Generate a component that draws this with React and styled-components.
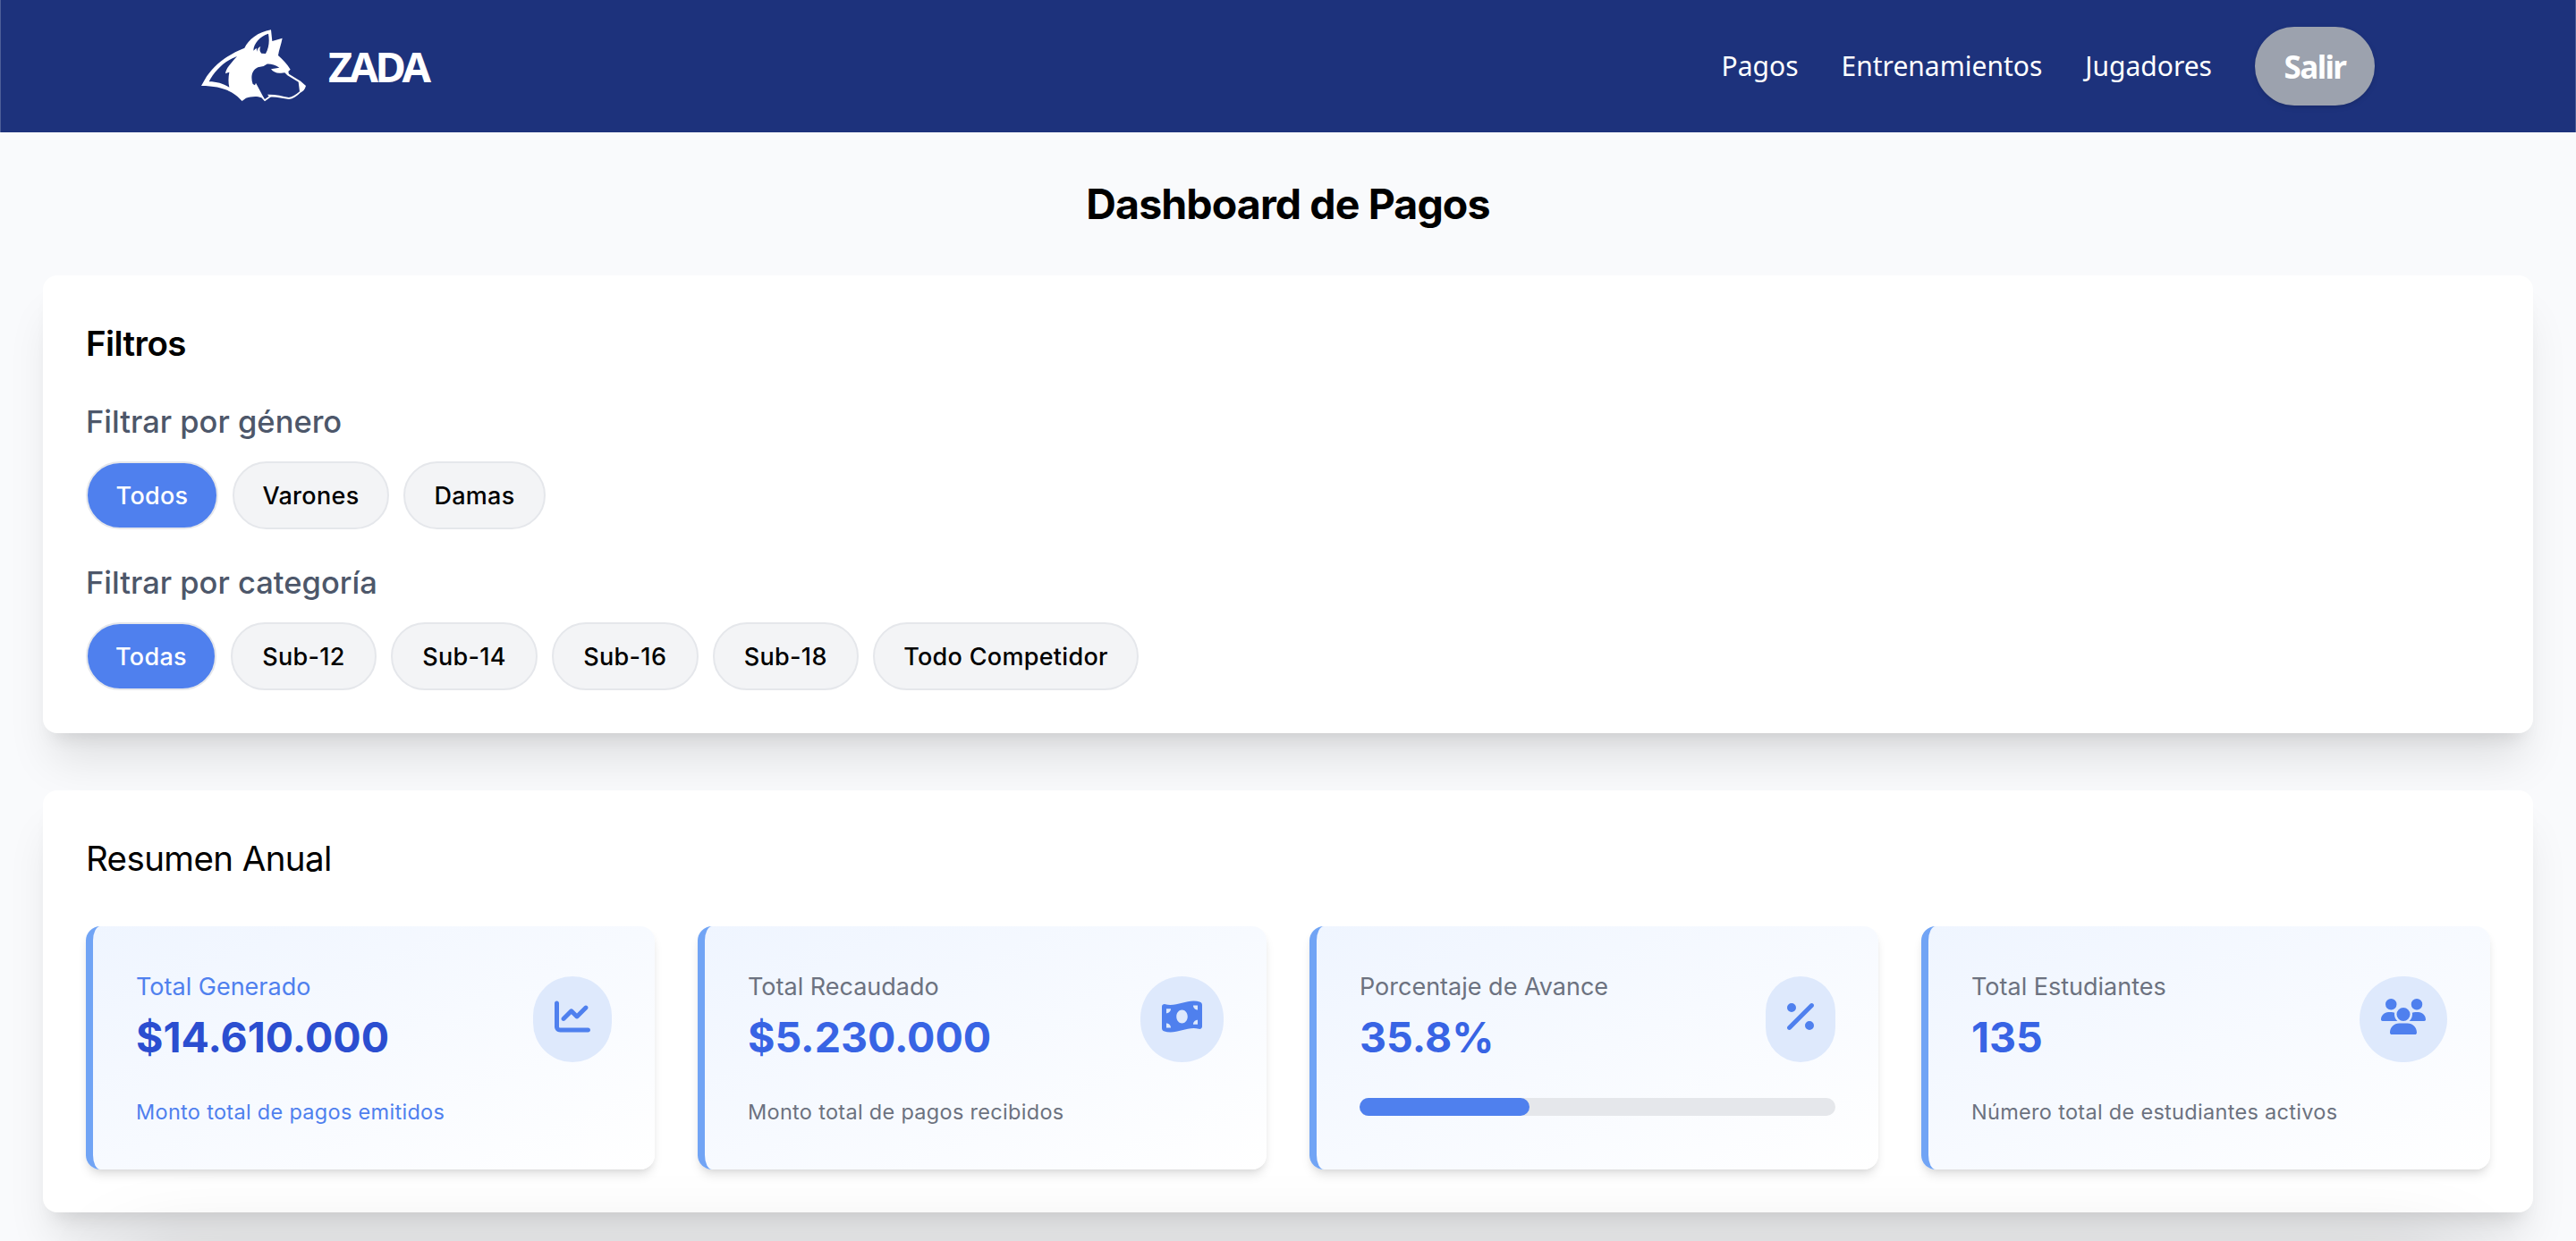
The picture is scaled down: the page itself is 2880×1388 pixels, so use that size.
import React from "react";
import styled, { createGlobalStyle } from "styled-components";
import { FaChartLine, FaMoneyBillWave, FaPercent, FaUsers } from "react-icons/fa6";

const GlobalStyle = createGlobalStyle`
  *, *::before, *::after { box-sizing: border-box; }
  html, body { margin: 0; height: 100%; overflow: hidden; }
  body { background: #f9fafc; font-family: Inter, "Liberation Sans", sans-serif; color: #000; }
  h1, h2, h3, p { margin: 0; }
  button { font-family: inherit; cursor: pointer; }
`;

const Page = styled.div`
  position: relative;
  display: flex;
  flex-direction: column;
  height: 1388px;
  overflow: hidden;
`;

const Header = styled.header`
  display: flex;
  align-items: center;
  justify-content: space-between;
  height: 148px;
  flex: none;
  padding: 0 224px;
  background: #1d327c;
  color: #fff;
  font-family: "Noto Sans", "Open Sans", sans-serif;
  border-left: 1px solid #4d5e98;
  border-right: 1px solid #4d5e98;
`;

const Brand = styled.div`
  display: flex;
  align-items: center;
  gap: 24px;
`;

const BrandName = styled.span`
  font-size: 47px;
  font-weight: 700;
  line-height: 64px;
  letter-spacing: -3.6px;
`;

const Nav = styled.nav`
  display: flex;
  align-items: center;
  gap: 48px;
`;

const NavLink = styled.a`
  color: #fff;
  font-size: 30px;
  line-height: 48px;
  font-stretch: 87.5%;
  letter-spacing: ${(p) => p.$track}px;
`;

const LogoutButton = styled.button`
  width: 134px;
  height: 88px;
  border: 0;
  border-radius: 44px;
  background: #9ca2ae;
  color: #fff;
  font-size: 35px;
  font-weight: 700;
  letter-spacing: -1.6px;
  box-shadow: 0 2px 6px rgba(0, 0, 0, 0.1), 0 2px 4px -2px rgba(0, 0, 0, 0.1);
`;

const Main = styled.main`
  display: flex;
  flex-direction: column;
  padding: 48px 48px 0;
`;

const PageTitle = styled.h1`
  font-size: 46.5px;
  line-height: 64px;
  height: 112px;
  font-weight: 700;
  text-align: center;
  letter-spacing: -0.9px;
`;

const Panel = styled.section`
  flex: none;
  height: ${(p) => p.$height}px;
  margin-bottom: 64px;
  padding: 48px;
  border-radius: 16px;
  background: #fff;
  box-shadow: 0 40px 50px -10px rgba(0, 0, 0, 0.1), 0 16px 20px -12px rgba(0, 0, 0, 0.1);
`;

const PanelTitle = styled.h2`
  font-size: 38.5px;
  line-height: 56px;
  font-weight: ${(p) => p.$weight};
  letter-spacing: ${(p) => p.$track}px;
  margin-bottom: ${(p) => p.$gap}px;
`;

const FilterGroup = styled.div`
  display: flex;
  flex-direction: column;
  gap: 16px;
  margin-bottom: 32px;
`;

const FilterLabel = styled.h3`
  font-size: 34.5px;
  line-height: 56px;
  font-weight: 500;
  color: #4d576a;
  letter-spacing: ${(p) => p.$track}px;
`;

const PillRow = styled.div`
  display: flex;
  gap: 16px;
`;

const Pill = styled.button`
  height: 76px;
  width: ${(p) => p.$width}px;
  padding: 0;
  border: 2px solid #e5e7eb;
  border-radius: 38px;
  background: ${(p) => (p.$active ? "#4f80ee" : "#f3f4f6")};
  color: ${(p) => (p.$active ? "#fff" : "#000")};
  font-size: 27px;
  font-weight: 500;
  letter-spacing: 0.3px;
  white-space: nowrap;
`;

const StatGrid = styled.div`
  display: grid;
  grid-template-columns: repeat(4, 1fr);
  gap: 48px;
`;

const StatCard = styled.article`
  display: flex;
  flex-direction: column;
  height: 272px;
  padding: 48px;
  border-left: 8px solid #71a4f5;
  border-radius: 16px;
  background: linear-gradient(to bottom right, #eff5ff, #fff);
  box-shadow: 0 8px 12px -2px rgba(0, 0, 0, 0.1), 0 4px 8px -4px rgba(0, 0, 0, 0.1);
`;

const StatHead = styled.div`
  display: flex;
  justify-content: space-between;
  align-items: center;
  height: 112px;
`;

const StatText = styled.div`
  display: flex;
  flex-direction: column;
`;

const StatLabel = styled.p`
  font-size: 27px;
  line-height: 40px;
  color: ${(p) => (p.$accent ? "#4f80ee" : "#6c7280")};
  letter-spacing: ${(p) => p.$track}px;
`;

const StatValue = styled.p`
  font-size: 46.5px;
  line-height: 72px;
  font-weight: 700;
  color: ${(p) => (p.$accent ? "#2b4ed0" : "#3864e4")};
  letter-spacing: ${(p) => p.$track}px;
`;

const StatNote = styled.p`
  margin-top: 32px;
  font-size: 23.5px;
  line-height: 32px;
  color: ${(p) => (p.$accent ? "#4f80ee" : "#6c7280")};
  letter-spacing: ${(p) => p.$track}px;
`;

const IconBadge = styled.div`
  display: flex;
  align-items: flex-start;
  height: 96px;
  padding: 25px 24px 0;
  border-radius: 48px;
  background: #dee9fc;
  color: #4f80ee;
  svg { display: block; height: 40px; width: ${(p) => p.$icon}px; }
`;

const ProgressTrack = styled.div`
  margin-top: 32px;
  height: 20px;
  border-radius: 10px;
  background: #e5e7eb;
`;

const ProgressFill = styled.div`
  height: 100%;
  border-radius: 10px;
  background: #4f80ee;
`;

const BottomShade = styled.div`
  position: absolute;
  left: 148px;
  right: 148px;
  top: 1420px;
  height: 200px;
  box-shadow: 0 0 100px rgba(0, 0, 0, 0.25);
`;

const WolfLogo = () => (
  <svg width="118" height="82" viewBox="72 95 354 246" fill="#fff" aria-hidden="true">
    <path
      fillRule="evenodd"
      d="M72 284 L84 263 C105 225 150 183 217 157 C230 130 262 103 306 96 L310 134 L344 124 C340 145 332 165 330 182 C345 196 360 210 371 229 L364 236 L366 244 L405 268 L423 284 C420 296 413 304 404 307 C394 318 380 327 366 329 C345 327 322 320 304 322 L285 336 L274 324 C256 317 238 321 222 325 L209 335 C185 308 150 284 72 284 Z
      M98 270 C125 270 145 277 166 289 C162 272 163 255 166 238 L153 243 C155 226 168 212 192 185 C150 200 117 233 98 270 Z
      M247 166 C247 142 270 117 297 109 C301 132 300 155 288 176 L274 175 C269 170 266 163 271 152 C263 155 260 161 259 169 L257 157 Z
      M245 278 C237 255 241 232 262 222 L281 218 L292 211 C305 210 320 214 334 223 L306 228 C314 238 326 243 340 241 L352 240 L361 249 L398 271 L402 303 C390 313 377 322 366 323 C342 318 320 312 294 313 L299 319 L285 329 C274 311 265 291 255 274 L252 282 Z"
    />
  </svg>
);

const genders = [
  { label: "Todos", width: 148, active: true },
  { label: "Varones", width: 175 },
  { label: "Damas", width: 159 },
];

const categories = [
  { label: "Todas", width: 146, active: true },
  { label: "Sub-12", width: 163 },
  { label: "Sub-14", width: 164 },
  { label: "Sub-16", width: 163.5 },
  { label: "Sub-18", width: 163.5 },
  { label: "Todo Competidor", width: 297 },
];

const stats = [
  { label: "Total Generado", value: "$14.610.000", note: "Monto total de pagos emitidos", Icon: FaChartLine, icon: 40, accent: true, tracks: [0, 0, 0.3] },
  { label: "Total Recaudado", value: "$5.230.000", note: "Monto total de pagos recibidos", Icon: FaMoneyBillWave, icon: 45, tracks: [0, 0, 0.3] },
  { label: "Porcentaje de Avance", value: "35.8%", progress: 35.8, Icon: FaPercent, icon: 30, tracks: [0, 0, 0] },
  { label: "Total Estudiantes", value: "135", note: "Número total de estudiantes activos", Icon: FaUsers, icon: 50, tracks: [0, 0, 0.3] },
];

const Pills = ({ items }) => (
  <PillRow>
    {items.map((i) => (
      <Pill key={i.label} $width={i.width} $active={i.active}>{i.label}</Pill>
    ))}
  </PillRow>
);

export default function App() {
  return (
    <Page>
      <GlobalStyle />
      <Header>
        <Brand>
          <WolfLogo />
          <BrandName>ZADA</BrandName>
        </Brand>
        <Nav>
          <NavLink $track={0}>Pagos</NavLink>
          <NavLink $track={0}>Entrenamientos</NavLink>
          <NavLink $track={0}>Jugadores</NavLink>
          <LogoutButton>Salir</LogoutButton>
        </Nav>
      </Header>
      <Main>
        <PageTitle>Dashboard de Pagos</PageTitle>
        <Panel $height={512}>
          <PanelTitle $weight={600} $track={-0.6} $gap={32}>Filtros</PanelTitle>
          <FilterGroup>
            <FilterLabel $track={0}>Filtrar por género</FilterLabel>
            <Pills items={genders} />
          </FilterGroup>
          <FilterGroup>
            <FilterLabel $track={0}>Filtrar por categoría</FilterLabel>
            <Pills items={categories} />
          </FilterGroup>
        </Panel>
        <Panel $height={472}>
          <PanelTitle $weight={400} $track={-0.6} $gap={48}>Resumen Anual</PanelTitle>
          <StatGrid>
            {stats.map(({ Icon, ...s }) => (
              <StatCard key={s.label}>
                <StatHead>
                  <StatText>
                    <StatLabel $accent={s.accent} $track={s.tracks[0]}>{s.label}</StatLabel>
                    <StatValue $accent={s.accent} $track={s.tracks[1]}>{s.value}</StatValue>
                  </StatText>
                  <IconBadge $icon={s.icon}><Icon /></IconBadge>
                </StatHead>
                {s.note && <StatNote $accent={s.accent} $track={s.tracks[2]}>{s.note}</StatNote>}
                {s.progress && (
                  <ProgressTrack>
                    <ProgressFill style={{ width: `${s.progress}%` }} />
                  </ProgressTrack>
                )}
              </StatCard>
            ))}
          </StatGrid>
        </Panel>
      </Main>
      <BottomShade />
    </Page>
  );
}
